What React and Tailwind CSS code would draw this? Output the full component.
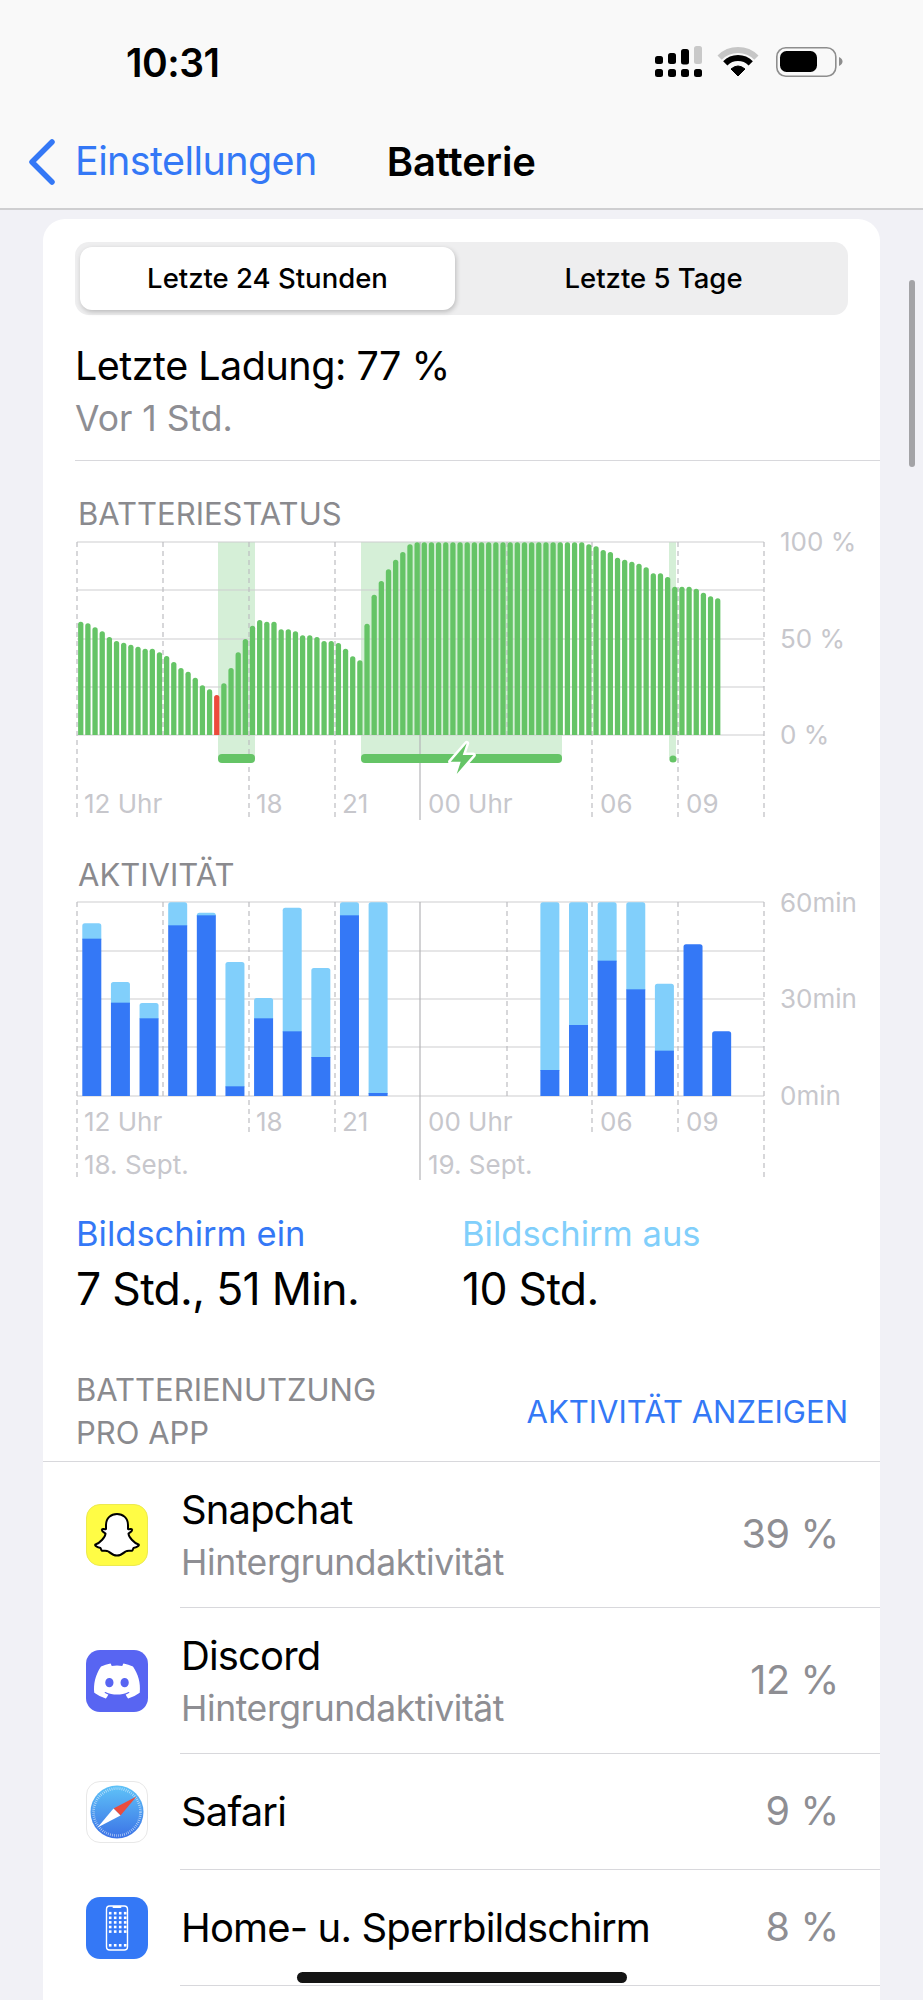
import React from 'react';
import { FaDiscord } from 'react-icons/fa6';

const GREEN = '#65c466';
const BLUE = '#3478f6';
const SKY = '#81cffb';
const LINE = '#cdcdd0';
const LABEL = '#c7c7cc';

// zoomed-in tops of the battery bars, in 3x pixels over a bottom of 736
const batteryTops = [
  395, 400, 412, 424, 441, 453, 458, 464, 470, 476, 476, 487, 498, 516, 534, 545, 563, 586, 598, 615,
  580, 534, 487, 447, 407, 390, 395, 395, 418, 418, 424, 436, 436, 441, 453, 453, 459, 476, 499, 511,
  401, 314, 273, 238, 209, 186, 163, 157, 157, 157, 157, 157, 157, 157, 157, 157, 157, 157, 157, 157,
  157, 157, 157, 157, 157, 157, 157, 157, 157, 157, 157, 163, 169, 180, 186, 203, 209, 215, 221, 232,
  250, 250, 261, 290, 290, 290, 296, 308, 319, 325,
];

// [light top, dark top] in 3x pixels over a bottom of 767, null for an empty slot
const activityBars = [
  [250, 296], [426, 488], [489, 535], [187, 256], [218, 226], [366, 739], [474, 535], [203, 574],
  [384, 651], [187, 226], [187, 759], null, null, null, null, null,
  [187, 690], [187, 555], [187, 362], [187, 448], [431, 632], [313, 313], [574, 574],
];

const vLines = [77, 163, 249, 335, 420, 507, 592, 678, 764];
const shortLines = [163, 507];

const roundedTop = (x, top, w, bottom, r) =>
  `M${x} ${bottom}V${top + r}Q${x} ${top} ${x + r} ${top}H${x + w - r}Q${x + w} ${top} ${x + w} ${top + r}V${bottom}Z`;

function AxisLabel({ x, y, children }) {
  return (
    <text x={x} y={y} fill={LABEL} fontSize="26">
      {children}
    </text>
  );
}

function VLine({ x, y1, y2, solid }) {
  return (
    <line
      x1={x}
      x2={x}
      y1={y1}
      y2={y2}
      stroke={solid ? '#b4b4b8' : '#bdbdc1'}
      strokeWidth="1.2"
      strokeDasharray={solid ? undefined : '5 4'}
    />
  );
}

function BatteryChart() {
  const grid = [542, 590, 639, 687, 735];
  return (
    <svg viewBox="43 536 837 290" width="837" height="290" className="block mt-[3.5px] overflow-visible">
      <rect x="218" y="542" width="37" height="216" fill="#d5efd7" />
      <rect x="361" y="542" width="201" height="216" fill="#d5efd7" />
      <rect x="669" y="542" width="7" height="216" fill="#d5efd7" />
      {grid.map((y) => (
        <line key={y} x1="77" x2="764" y1={y} y2={y} stroke={LINE} strokeWidth="1.2" />
      ))}
      {vLines.map((x) => (
        <VLine key={x} x={x} y1={542} y2={x === 420 ? 820 : shortLines.includes(x) ? 735 : 817} solid={x === 420} />
      ))}
      {batteryTops.map((top, i) => (
        <path
          key={i}
          d={roundedTop(78.1 + i * 7.157, 490 + top / 3, 5.3, 735, 2.6)}
          fill={i === 19 ? '#ec4b3c' : GREEN}
        />
      ))}
      <rect x="218" y="754" width="37" height="9" rx="4" fill={GREEN} />
      <rect x="361" y="754" width="201" height="9" rx="4" fill={GREEN} />
      <circle cx="673" cy="759" r="3.6" fill={GREEN} />
      <path
        d="M466.7 743.3 450.7 761.7H460.7L456.7 774 473.3 755H462.7Z"
        fill={GREEN}
        stroke="#fff"
        strokeWidth="5"
        strokeLinejoin="round"
        paintOrder="stroke"
      />
      <AxisLabel x={84} y={813}>12 Uhr</AxisLabel>
      <AxisLabel x={256} y={813}>18</AxisLabel>
      <AxisLabel x={342} y={813}>21</AxisLabel>
      <AxisLabel x={428} y={813}>00 Uhr</AxisLabel>
      <AxisLabel x={600} y={813}>06</AxisLabel>
      <AxisLabel x={686} y={813}>09</AxisLabel>
      <AxisLabel x={780} y={551}>100 %</AxisLabel>
      <AxisLabel x={780} y={648}>50 %</AxisLabel>
      <AxisLabel x={780} y={744}>0 %</AxisLabel>
    </svg>
  );
}

function ActivityChart() {
  const grid = [902, 951, 999, 1047, 1096];
  const longLines = [77, 420, 764];
  return (
    <svg viewBox="43 896 837 290" width="837" height="290" className="block mt-[3px] overflow-visible">
      {grid.map((y) => (
        <line key={y} x1="77" x2="764" y1={y} y2={y} stroke={LINE} strokeWidth="1.2" />
      ))}
      {vLines.map((x) => (
        <VLine
          key={x}
          x={x}
          y1={902}
          y2={longLines.includes(x) ? 1180 : shortLines.includes(x) ? 1096 : 1135}
          solid={x === 420}
        />
      ))}
      {activityBars.map((bar, i) => {
        if (!bar) return null;
        const x = 82.3 + i * 28.63;
        const lightTop = 840 + bar[0] / 3;
        const darkTop = 840 + bar[1] / 3;
        const darkOnly = bar[0] === bar[1];
        return (
          <g key={i}>
            {!darkOnly && <path d={roundedTop(x, lightTop, 19, darkTop + 1, 2.5)} fill={SKY} />}
            {darkOnly ? (
              <path d={roundedTop(x, darkTop, 19, 1096, 2.5)} fill={BLUE} />
            ) : (
              <rect x={x} y={darkTop} width="19" height={1096 - darkTop} fill={BLUE} />
            )}
          </g>
        );
      })}
      <AxisLabel x={84} y={1131}>12 Uhr</AxisLabel>
      <AxisLabel x={256} y={1131}>18</AxisLabel>
      <AxisLabel x={342} y={1131}>21</AxisLabel>
      <AxisLabel x={428} y={1131}>00 Uhr</AxisLabel>
      <AxisLabel x={600} y={1131}>06</AxisLabel>
      <AxisLabel x={686} y={1131}>09</AxisLabel>
      <AxisLabel x={84} y={1174}>18. Sept.</AxisLabel>
      <AxisLabel x={428} y={1174}>19. Sept.</AxisLabel>
      <AxisLabel x={780} y={912}>60min</AxisLabel>
      <AxisLabel x={780} y={1008}>30min</AxisLabel>
      <AxisLabel x={780} y={1105}>0min</AxisLabel>
    </svg>
  );
}

function StatusIcons() {
  const arc = (r) => {
    const d = r * 0.7071;
    return `M${738 - d} ${76 - d}A${r} ${r} 0 0 1 ${738 + d} ${76 - d}`;
  };
  return (
    <svg viewBox="654 45 190 33" width="190" height="33" className="block">
      <rect x="655" y="56" width="8" height="8" rx="2.5" />
      <rect x="668" y="53" width="8" height="11" rx="2.5" />
      <rect x="681" y="49" width="8" height="15.5" rx="2.5" />
      <rect x="694" y="46" width="8" height="18" rx="2.5" fill="#c9c9c9" />
      {[655, 668, 681, 694].map((x) => (
        <rect key={x} x={x} y="69" width="8" height="8" rx="2.5" />
      ))}
      <path d={arc(26)} fill="none" stroke="#c6c6c6" strokeWidth="6" />
      <path d={arc(18)} fill="none" stroke="#000" strokeWidth="6" />
      <path d="M738 76 731 69Q738 63 745 69Z" stroke="#000" strokeLinejoin="round" />
      <rect x="776.8" y="47.8" width="59" height="28.5" rx="9" fill="none" stroke="#8e8e8e" strokeWidth="1.6" />
      <rect x="780" y="51" width="37" height="21" rx="6.5" />
      <path d="M839 57C841.5 58 842.5 60 842.5 61.5S841.5 65 839 66Z" fill="#8e8e8e" />
    </svg>
  );
}

function SnapchatIcon() {
  return (
    <div className="w-[62px] h-[62px] rounded-[14px] bg-[#fffc45] border border-[#ecea50]">
      <svg viewBox="1 1 60 60" width="60" height="60" className="block">
        <path
          d="M31 10C37 10 42 14 42 21L42 25C43.5 25.5 45.5 24.5 46 25.5C46.8 27 44 28.5 42.5 29.5C42.5 33 48 39 52.5 40.5C53.5 41 52.5 43 47.5 44C46.8 45 47 46.5 46 46.8C44 47 42 46 39.5 47.5C37 49.5 35 51.5 31 51.5C27 51.5 25 49.5 22.5 47.5C20 46 18 47 16 46.8C15 46.5 15.2 45 14.5 44C9.5 43 8.5 41 9.5 40.5C14 39 19.5 33 19.5 29.5C18 28.5 15.2 27 16 25.5C16.5 24.5 18.5 25.5 20 25L20 21C20 14 25 10 31 10Z"
          fill="#fff"
          stroke="#000"
          strokeWidth="2"
          strokeLinejoin="round"
        />
      </svg>
    </div>
  );
}

function SafariIcon() {
  return (
    <div className="w-[62px] h-[62px] rounded-[14px] border border-[#e8e8e8] bg-white">
      <svg viewBox="0 0 60 60" width="60" height="60" className="block">
        <defs>
          <linearGradient id="safari" x1="0" y1="0" x2="0" y2="1">
            <stop offset="0" stopColor="#5fc3f8" />
            <stop offset="1" stopColor="#3b72e6" />
          </linearGradient>
        </defs>
        <circle cx="30" cy="30" r="26.5" fill="url(#safari)" />
        <circle cx="30" cy="30" r="23.5" fill="none" stroke="#ffffff" strokeOpacity="0.65" strokeWidth="2.6" strokeDasharray="0.7 1.35" />
        <path d="M49.5 14.5 26.5 26.5 33.5 33.5Z" fill="#ea4c3e" />
        <path d="M10.5 45.5 26.5 26.5 33.5 33.5Z" fill="#fff" />
      </svg>
    </div>
  );
}

function HomeIcon() {
  const xs = [24, 29, 34, 39];
  const ys = [16, 20.6, 25.2, 29.8, 34.4];
  return (
    <div className="w-[62px] h-[62px] rounded-[14px] bg-[#3478f6]">
      <svg viewBox="0 0 62 62" width="62" height="62" className="block">
        <rect x="20.5" y="9" width="21" height="44" rx="3.2" fill="none" stroke="#fff" strokeWidth="1.4" />
        <rect x="26.5" y="9" width="9" height="2" rx="1" fill="#fff" />
        {ys.map((y) =>
          xs.map((x) => <rect key={`${x}-${y}`} x={x - 1.1} y={y - 1.1} width="2.6" height="2.6" fill="#fff" />)
        )}
        {xs.map((x) => (
          <rect key={x} x={x - 1.1} y="47" width="2.6" height="2.6" fill="#fff" />
        ))}
      </svg>
    </div>
  );
}

function AppRow({ icon, name, sub, value, height }) {
  return (
    <div className="flex items-stretch" style={{ height }}>
      <div className="w-[137px] shrink-0 flex items-center pl-[43px]">{icon}</div>
      <div className="flex-1 flex items-center justify-between pl-[1px] pr-[41px] border-b-[1.5px] border-[#d8d8dc]">
        <div>
          <div className="text-[40px] leading-[48px] text-black tracking-[-0.85px]">{name}</div>
          {sub && <div className="text-[35.5px] leading-[42px] mt-[8px] text-[#8e8e93] tracking-[-0.4px]">{sub}</div>}
        </div>
        <div className="text-[39.5px] text-[#8e8e93] tracking-[-0.3px]">{value}</div>
      </div>
    </div>
  );
}

export default function App() {
  return (
    <div className="relative h-[2000px] overflow-hidden bg-[#f1f1f6] font-[Inter,sans-serif] text-black">
      {/* Header */}
      <div className="h-[210px] bg-[#f9f9f9] border-b-2 border-[#cfcfd1]">
        <div className="flex items-start justify-between pt-[45px] pl-[126px] pr-[79px] h-[132px]">
          <span className="text-[39px] leading-[36px] font-semibold tracking-[-0.5px]">10:31</span>
          <StatusIcons />
        </div>
        <div className="flex items-center h-[60px] pl-[28px]">
          <svg viewBox="0 0 28 46" width="28" height="46" className="shrink-0">
            <path d="M24 3 4 23l20 20" fill="none" stroke={BLUE} strokeWidth="5.5" strokeLinecap="round" strokeLinejoin="round" />
          </svg>
          <span className="ml-[19px] text-[39.5px] text-[#3478f6] tracking-[-0.6px]">Einstellungen</span>
          <span className="ml-[70px] text-[40px] font-semibold tracking-[-0.1px]">Batterie</span>
        </div>
      </div>

      {/* Card */}
      <div className="mt-[9px] mx-[43px] bg-white rounded-t-[22px]">
        <div className="pt-[23px] px-[32px]">
          <div className="flex h-[73px] p-[5px] rounded-[14px] bg-[#eeeeef]">
            <div className="w-[375px] shrink-0 flex items-center justify-center rounded-[12px] bg-white shadow-[1px_2px_5px_rgba(0,0,0,0.22)] text-[27.5px] font-medium">
              Letzte 24 Stunden
            </div>
            <div className="flex-1 flex items-center justify-center pl-[9px] text-[27.5px] font-medium">Letzte 5 Tage</div>
          </div>
          <div className="mt-[27px] text-[39.5px] leading-[48px] tracking-[-0.5px]">Letzte Ladung: 77 %</div>
          <div className="mt-[8px] text-[35.5px] leading-[42px] text-[#8e8e93]">Vor 1 Std.</div>
        </div>
        <div className="ml-[32px] mt-[20px] border-b-[1.5px] border-[#d8d8dc]" />

        <div className="pl-[35px] mt-[35px] text-[31px] leading-[36px] text-[#8a8a8e]">BATTERIESTATUS</div>
        <BatteryChart />
        <div className="pl-[35px] mt-[31px] text-[31px] leading-[36px] text-[#8a8a8e]">AKTIVITÄT</div>
        <ActivityChart />

        <div className="flex pl-[33px] mt-[26.5px]">
          <div className="w-[386px]">
            <div className="text-[34.5px] leading-[44px] text-[#3478f6]">Bildschirm ein</div>
            <div className="text-[44.5px] leading-[50px] mt-[7.5px] tracking-[-0.7px]">7 Std., 51 Min.</div>
          </div>
          <div>
            <div className="text-[34.5px] leading-[44px] text-[#81cffb]">Bildschirm aus</div>
            <div className="text-[44.5px] leading-[50px] mt-[7.5px] tracking-[-0.7px]">10 Std.</div>
          </div>
        </div>

        <div className="flex items-center justify-between pl-[33px] pr-[32px] mt-[54.5px] pb-[7px] border-b-[1.5px] border-[#d8d8dc]">
          <div className="text-[31px] leading-[43px] text-[#8a8a8e]">
            BATTERIENUTZUNG
            <br />
            PRO APP
          </div>
          <div className="text-[31px] leading-[43px] text-[#3478f6]">AKTIVITÄT ANZEIGEN</div>
        </div>

        <AppRow height={146} name="Snapchat" sub="Hintergrundaktivität" value="39 %" icon={<SnapchatIcon />} />
        <AppRow
          height={146}
          name="Discord"
          sub="Hintergrundaktivität"
          value="12 %"
          icon={
            <div className="w-[62px] h-[62px] rounded-[14px] bg-[#5865f2] flex items-center justify-center">
              <FaDiscord size={50} color="#fff" />
            </div>
          }
        />
        <AppRow height={116} name="Safari" value="9 %" icon={<SafariIcon />} />
        <AppRow height={116} name="Home- u. Sperrbildschirm" value="8 %" icon={<HomeIcon />} />
        <div className="h-[40px]" />
      </div>

      {/* Scrollbar and home indicator lie over the page */}
      <div className="absolute left-[909px] top-[280px] w-[6px] h-[187px] rounded-full bg-[#a3a3a6]" />
      <div className="absolute left-[297px] top-[1972px] w-[330px] h-[11px] rounded-full bg-[#141414]" />
    </div>
  );
}
